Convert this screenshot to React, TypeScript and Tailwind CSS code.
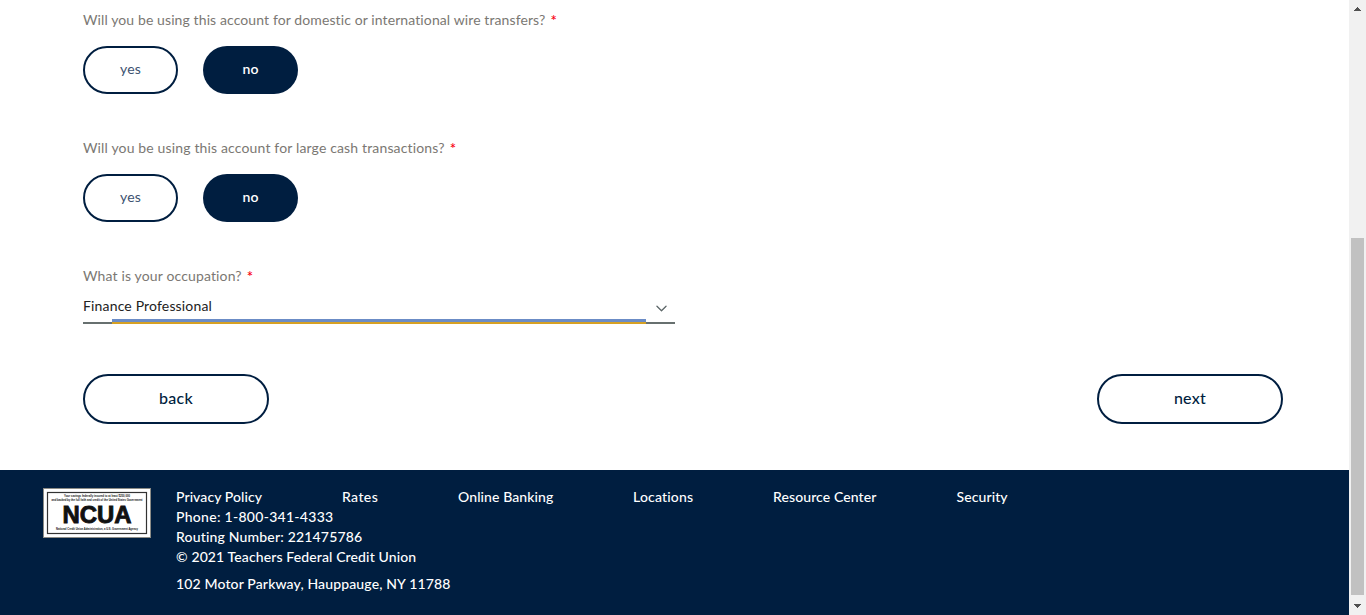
import { ChevronDown } from "lucide-react";

function Label({ children, className }: { children: string; className: string }) {
  return (
    <div className="flex h-5 items-center text-[14px] leading-5 whitespace-nowrap text-[#7b7873]">
      <span className={className}>{children}</span>
      <span className="ml-[5px] text-[15px] font-medium text-[#f80010]">*</span>
    </div>
  );
}

function YesNo() {
  return (
    <div className="mt-4 flex gap-[25px] text-[14px]">
      <button className="h-12 w-[95px] rounded-full border-2 border-[#001e40] bg-white pb-[3px] tracking-[0.17px] text-[#3c5270]">
        yes
      </button>
      <button className="h-12 w-[95px] rounded-full bg-[#001e40] pb-[3px] font-semibold text-white">no</button>
    </div>
  );
}

function NavButton({ children }: { children: string }) {
  return (
    <button className="h-[50px] w-[186px] rounded-full border-2 border-[#001e40] bg-white pb-[3px] text-[16px] font-medium tracking-[0.25px] text-[#001e40]">
      {children}
    </button>
  );
}

function NcuaBadge() {
  return (
    <svg width="108" height="50" viewBox="0 0 108 50" className="mt-[18px] shrink-0 font-['Liberation_Sans']">
      <rect x="0.5" y="0.5" width="107" height="49" fill="#fff" stroke="#8b8b86" />
      <rect x="4.5" y="4.5" width="99" height="41" fill="#fff" stroke="#333" strokeWidth="1.2" />
      <g fill="#111" fontWeight="700" textAnchor="middle">
        <text x="54" y="9.4" fontSize="2.9" textLength="66" lengthAdjust="spacingAndGlyphs">
          Your savings federally insured to at least $250,000
        </text>
        <text x="54" y="12.7" fontSize="2.9" textLength="91" lengthAdjust="spacingAndGlyphs">
          and backed by the full faith and credit of the United States Government
        </text>
        <text x="54" y="34.6" fontSize="24" textLength="69" lengthAdjust="spacingAndGlyphs" stroke="#111" strokeWidth="0.9">
          NCUA
        </text>
        <text x="54" y="42.3" fontSize="2.9" textLength="82" lengthAdjust="spacingAndGlyphs">
          National Credit Union Administration, a U.S. Government Agency
        </text>
      </g>
    </svg>
  );
}

function Footer() {
  return (
    <footer className="flex h-[145px] bg-[#001e40] pl-[43px] text-[14px] leading-5 font-medium whitespace-nowrap text-white">
      <NcuaBadge />
      <div className="ml-[25px] pt-[17px]">
        <nav className="flex gap-20">
          <a className="w-[86px] tracking-[0.08px]">Privacy Policy</a>
          <a className="w-9 tracking-[0.4px]">Rates</a>
          <a className="w-[95px] tracking-[0.1px]">Online Banking</a>
          <a className="w-[60px] tracking-[0.18px]">Locations</a>
          <a className="w-[103.5px] tracking-[0.1px]">Resource Center</a>
          <a className="tracking-[0.1px]">Security</a>
        </nav>
        <p className="tracking-[0.286px]">Phone: 1-800-341-4333</p>
        <p className="tracking-[0.18px]">Routing Number: 221475786</p>
        <p className="tracking-[0.12px]">© 2021 Teachers Federal Credit Union</p>
        <p className="mt-[7px] tracking-[0.141px]">102 Motor Parkway, Hauppauge, NY 11788</p>
      </div>
    </footer>
  );
}

function Scrollbar() {
  return (
    <div className="flex w-[17px] shrink-0 flex-col items-center justify-between bg-[#f1f1f1]">
      <svg width="17" height="17" viewBox="0 0 17 17" fill="#505050" shapeRendering="crispEdges">
        <path d="M8 7h1v1h1v1h1v1h1v1H5v-1h1V9h1V8h1z" />
      </svg>
      <div className="mt-auto h-[357px] w-[13px] bg-[#c1c1c1]" />
      <svg width="17" height="20" viewBox="0 0 17 20" fill="#505050" shapeRendering="crispEdges">
        <path d="M5 9h7v1h-1v1h-1v1H9v1H8v-1H7v-1H6v-1H5z" />
      </svg>
    </div>
  );
}

export default function App() {
  return (
    <div className="flex h-[615px] overflow-hidden bg-white font-['Lato',sans-serif]">
      <div className="flex min-w-0 flex-1 flex-col">
        <main className="h-[470px] pr-[66px] pl-[83px] pt-[10px]">
          <Label className="tracking-[0.104px]">
            Will you be using this account for domestic or international wire transfers?
          </Label>
          <YesNo />
          <div className="mt-11">
            <Label className="tracking-[0.15px]">Will you be using this account for large cash transactions?</Label>
            <YesNo />
          </div>
          <div className="mt-11">
            <Label className="tracking-[0.144px]">What is your occupation?</Label>
          </div>
          <div className="w-[592px]">
            <div className="flex h-[33px] items-center justify-between pt-[5px] pr-[7px] text-[14px] text-[#222]">
              <span className="tracking-[0.16px]">Finance Professional</span>
              <ChevronDown className="mt-[6px] size-[13px] scale-[1.4] text-[#5c6668]" strokeWidth={1.7} />
            </div>
            <div className="flex h-[5px] items-end">
              <div className="h-0.5 w-[29px] bg-[#67706f]" />
              <div className="h-[5px] w-[534px] border-b-2 border-[#d6a023] bg-[#6b8cc6]" />
              <div className="h-0.5 w-[29px] bg-[#67706f]" />
            </div>
          </div>
          <div className="mt-[50px] flex justify-between">
            <NavButton>back</NavButton>
            <NavButton>next</NavButton>
          </div>
        </main>
        <Footer />
      </div>
      <Scrollbar />
    </div>
  );
}
